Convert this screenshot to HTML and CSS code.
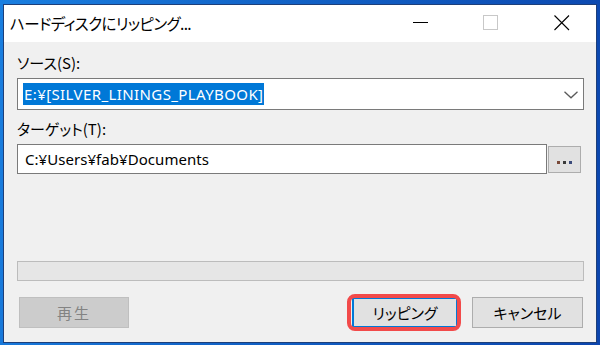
FILE: index.html
```html
<!DOCTYPE html>
<html lang="ja">
<head>
<meta charset="utf-8">
<title>ハードディスクにリッピング...</title>
<link rel="stylesheet" href="styles.css">
</head>
<body>
<div class="window">
  <div class="titlebar">
    <div class="title">ハードディスクにリッピング...</div>
    <div class="caption-buttons">
      <span class="cap cap-min"><svg width="16" height="16" viewBox="0 0 16 16"><line x1="0" y1="7.5" x2="15" y2="7.5" stroke="#000" stroke-width="1"/></svg></span>
      <span class="cap cap-max"><svg width="16" height="16" viewBox="0 0 16 16"><rect x="0.5" y="0.5" width="14" height="14" fill="none" stroke="#c8c8c8" stroke-width="1"/></svg></span>
      <span class="cap cap-close"><svg width="16" height="16" viewBox="0 0 16 16"><path d="M0.5 0.5 L15 15 M15 0.5 L0.5 15" stroke="#000" stroke-width="1.1" fill="none"/></svg></span>
    </div>
  </div>
  <div class="content">
    <div class="label label-source">ソース(S):</div>
    <div class="combo">
      <span class="sel">E:¥[SILVER_LININGS_PLAYBOOK]</span>
      <svg class="chev" width="14" height="8" viewBox="0 0 14 8"><path d="M0.5 0.8 L7 6.8 L13.5 0.8" stroke="#5a5a5a" stroke-width="1.3" fill="none"/></svg>
    </div>
    <div class="label label-target">ターゲット(T):</div>
    <div class="target-row">
      <div class="textbox">C:¥Users¥fab¥Documents</div>
      <div class="browse"><span class="dot d1"></span><span class="dot d2"></span><span class="dot d3"></span></div>
    </div>
    <div class="progress"></div>
    <div class="buttons">
      <div class="btn btn-play">再生</div>
      <div class="spacer"></div>
      <div class="btn btn-rip">リッピング</div>
      <div class="btn btn-cancel">キャンセル</div>
    </div>
  </div>
</div>
</body>
</html>
```
FILE: styles.css
```css
* { box-sizing: border-box; }
html, body {
  margin: 0;
  padding: 0;
  width: 600px;
  height: 345px;
  overflow: hidden;
}
body {
  background: linear-gradient(100deg, #1a7fe0 0%, #1264c8 40%, #0c45ad 100%);
  font-family: "Noto Sans", "Noto Sans CJK JP", sans-serif;
  padding: 4px 3px 2px 3px;
}
.window {
  width: 594px;
  height: 339px;
  border: 1px solid #1d3f7a;
  background: #f0f0f0;
  display: flex;
  flex-direction: column;
}
.titlebar {
  height: 37px;
  background: #ffffff;
  display: flex;
  align-items: center;
}
.title {
  font-family: "Noto Sans CJK JP", sans-serif;
  font-feature-settings: "palt";
  font-size: 15.5px;
  color: #000;
  padding-left: 6px;
  margin-top: -2px;
  letter-spacing: -0.6px;
}
.caption-buttons {
  margin-left: auto;
  display: flex;
  height: 100%;
  align-items: center;
}
.cap {
  display: flex;
  width: 16px;
  height: 16px;
  margin-top: -2px;
}
.cap-min { margin-right: 54px; }
.cap-max { margin-right: 55px; }
.cap-close { margin-right: 26px; }

.content {
  flex: 1;
  padding: 0 12px 0 13px;
  display: flex;
  flex-direction: column;
}
.label {
  font-family: "Noto Sans CJK JP", sans-serif;
  font-feature-settings: "palt";
  font-size: 15px;
  line-height: 20px;
  color: #000;
}
.label-source { margin-top: 11px; }
.label-target { margin-top: 9px; }

.combo {
  margin-top: 5px;
  height: 32px;
  border: 1px solid #7a7a7a;
  background: #fff;
  display: flex;
  align-items: center;
  padding-left: 5px;
  padding-right: 5px;
}
.sel {
  background: #0078d7;
  color: #fff;
  font-size: 15px;
  line-height: 22px;
  padding: 0 1px;
  letter-spacing: 0.4px;
}
.chev { margin-left: auto; margin-top: 1px; }

.target-row {
  margin-top: 5px;
  display: flex;
  align-items: center;
}
.textbox {
  width: 530px;
  height: 30px;
  border: 1px solid #7a7a7a;
  background: #fff;
  font-size: 15px;
  line-height: 28px;
  padding-left: 7px;
  color: #000;
  letter-spacing: 0.05px;
}
.browse {
  margin-left: 1px;
  width: 33px;
  height: 27px;
  border: 1px solid #adadad;
  background: #e1e1e1;
  display: flex;
  align-items: flex-end;
  justify-content: center;
  gap: 3px;
  padding-bottom: 8px;
}
.dot {
  width: 3px;
  height: 3px;
  background: #3a3a3a;
}
.d1 { background: #7a4a3a; }
.d3 { background: #3a4a7a; }

.progress {
  margin-top: 87px;
  height: 20px;
  border: 1px solid #bcbcbc;
  background: #e6e6e6;
}
.buttons {
  margin-top: 16px;
  display: flex;
  align-items: center;
}
.btn {
  height: 31px;
  display: flex;
  align-items: center;
  justify-content: center;
  font-family: "Noto Sans CJK JP", sans-serif;
  font-feature-settings: "palt";
  font-size: 15px;
  border: 1px solid #adadad;
  background: #e1e1e1;
  color: #000;
}
.btn-play {
  width: 110px;
  margin-left: 2px;
  background: #cccccc;
  border-color: #bfbfbf;
  color: #838383;
  letter-spacing: 2px;
}
.spacer { flex: 1; }
.btn-rip {
  width: 106px;
  border: 2px solid #0078d7;
  margin-right: 14px;
  position: relative;
}
.btn-rip::after {
  content: "";
  position: absolute;
  left: -7px;
  right: -5px;
  top: -5px;
  bottom: -5px;
  border: 4px solid #f24a4a;
  border-radius: 8px;
}
.btn-cancel {
  width: 111px;
  margin-right: 1px;
}
```
